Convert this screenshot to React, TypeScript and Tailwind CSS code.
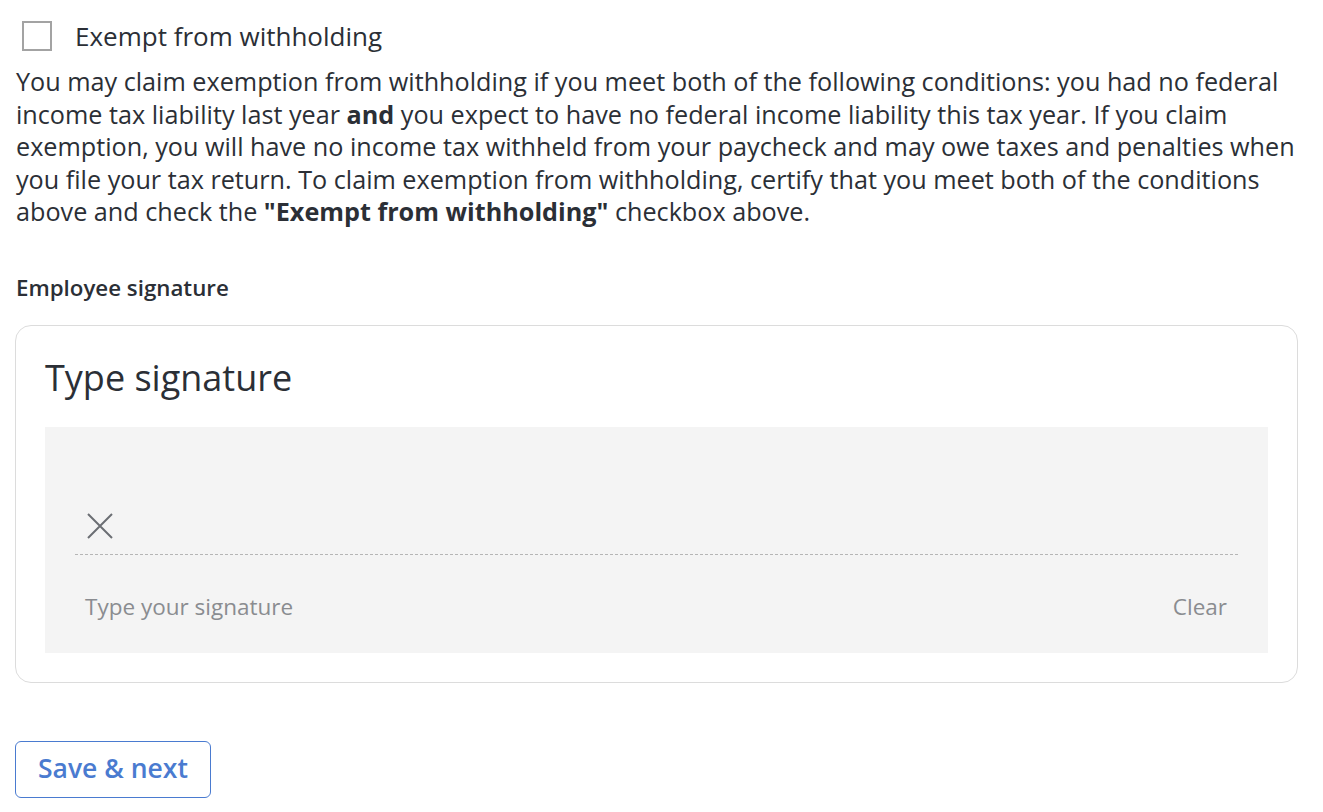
export default function App() {
  return (
    <div className="min-h-[812px] bg-white pl-4 font-['Open_Sans',sans-serif] text-[#2b2f36]">
      <div className="w-[1282px]">
        {/* Exempt checkbox */}
        <label className="flex items-center pt-[21px]">
          <span className="ml-[6px] h-[30px] w-[30px] shrink-0 border-2 border-[#a3a3a3] bg-white" />
          <span className="ml-[23px] text-[26px] leading-[30px]">Exempt from withholding</span>
        </label>

        <p className="mt-[14px] w-[1300px] text-[25.2px] leading-[32.5px]">
          You may claim exemption from withholding if you meet both of the following conditions: you had no federal
          income tax liability last year <b className="font-bold">and</b> you expect to have no federal income liability
          this tax year. If you claim exemption, you will have no income tax withheld from your paycheck and may owe
          taxes and penalties when you file your tax return. To claim exemption from withholding, certify that you meet
          both of the conditions above and check the <b className="font-bold">"Exempt from withholding"</b> checkbox
          above.
        </p>

        {/* Signature */}
        <div className="mt-[45px] text-[22.3px] font-semibold leading-[30px]">Employee signature</div>

        <div className="-ml-px mt-[22px] rounded-[16px] border border-[#dcdcdc] px-[29px] pt-[28px] pb-[29px]">
          <div className="text-[36px] leading-[48px]">Type signature</div>
          <div className="mt-[25px] bg-[#f4f4f4] px-[30px] pt-[85px] pb-[30px]">
            <div className="flex items-end border-b border-dashed border-[#b5b5b5] pb-[14px]">
              <svg width="28" height="28" viewBox="0 0 28 28" className="ml-[11px]" fill="none">
                <path d="M2 2L26 26M26 2L2 26" stroke="#6b6e73" strokeWidth="2" />
              </svg>
            </div>
            <div className="mt-[36px] flex items-center justify-between pl-[10px] pr-[11px] text-[22.5px] leading-[32px] text-[#8a8c90]">
              <span>Type your signature</span>
              <span>Clear</span>
            </div>
          </div>
        </div>

        <button className="-ml-px mt-[58px] h-[57px] rounded-[6px] border border-[#4a7bd0] px-[22px] text-[26.5px] font-semibold text-[#4a7bd0]">
          Save &amp; next
        </button>
      </div>
    </div>
  );
}
